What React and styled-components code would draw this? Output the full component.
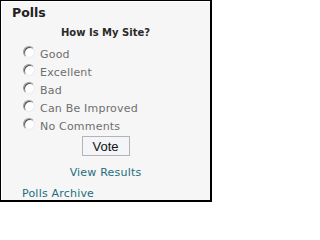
import React from "react";
import styled, { createGlobalStyle } from "styled-components";

const Global = createGlobalStyle`
  body {
    margin: 0;
    font-family: "DejaVu Sans", Verdana, sans-serif;
  }
`;

const Panel = styled.div`
  box-sizing: border-box;
  width: 212px;
  height: 202px;
  border-style: solid;
  border-color: #000;
  border-width: 1px 2px 2px 1px;
  background: #f6f6f6;
  box-shadow: inset 1px 1px 0 #fff;
  padding: 4px 0 0 0;
`;

const Title = styled.h2`
  margin: 0 0 0 11px;
  font-size: 12.5px;
  line-height: 15px;
  font-weight: bold;
  color: #222;
`;

const Question = styled.div`
  margin-top: 6px;
  text-align: center;
  font-size: 10px;
  line-height: 13px;
  font-weight: bold;
  color: #2a2a2a;
`;

const Options = styled.ul`
  list-style: none;
  margin: 7px 0 0 0;
  padding: 0 0 0 22px;
`;

const Option = styled.li`
  display: flex;
  align-items: flex-start;
  height: 18px;
  font-size: 11px;
  line-height: 18px;
  color: #6e6e6e;
  letter-spacing: 0.2px;
`;

const Radio = styled.span`
  box-sizing: border-box;
  width: 12px;
  height: 12px;
  margin: 0 5px 0 0;
  border-radius: 50%;
  border: 1px solid;
  border-color: #9a9a9a #ececec #ececec #9a9a9a;
  box-shadow: inset 1px 1px 0 #555;
  background: #fff;
  flex-shrink: 0;
`;

const Actions = styled.div`
  display: flex;
  flex-direction: column;
  align-items: center;
`;

const VoteButton = styled.button`
  margin-top: 0;
  width: 48px;
  height: 20px;
  padding: 0;
  border: 1px solid #b4b4b4;
  background: #f3f5f8;
  font-family: "Liberation Sans", Arial, sans-serif;
  font-size: 13px;
  color: #111;
`;

const ResultsLink = styled.a`
  margin-top: 10px;
  font-size: 11px;
  line-height: 13px;
  color: #1d6e7e;
  text-decoration: none;
  letter-spacing: 0.2px;
`;

const ArchiveLink = styled.a`
  display: block;
  margin: 8px 0 0 21px;
  font-size: 11px;
  line-height: 13px;
  color: #1d6e7e;
  text-decoration: none;
  letter-spacing: 0.2px;
`;

const answers = ["Good", "Excellent", "Bad", "Can Be Improved", "No Comments"];

export default function App() {
  return (
    <>
      <Global />
      <Panel>
        <Title>Polls</Title>
        <Question>How Is My Site?</Question>
        <Options>
          {answers.map((a) => (
            <Option key={a}>
              <Radio />
              {a}
            </Option>
          ))}
        </Options>
        <Actions>
          <VoteButton>Vote</VoteButton>
          <ResultsLink href="#">View Results</ResultsLink>
        </Actions>
        <ArchiveLink href="#">Polls Archive</ArchiveLink>
      </Panel>
    </>
  );
}
